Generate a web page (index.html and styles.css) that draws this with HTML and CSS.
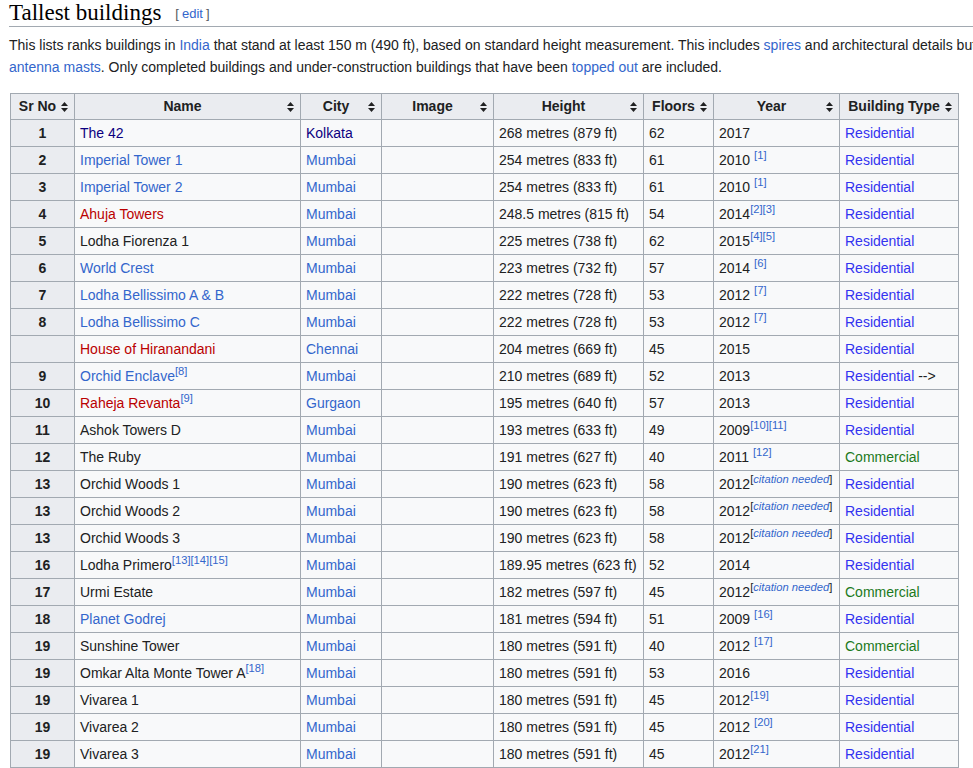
FILE: index.html
```html
<!DOCTYPE html>
<html lang="en">
<head>
<meta charset="utf-8">
<title>Tallest buildings</title>
<link rel="stylesheet" href="styles.css">
</head>
<body>
<div class="content">
  <h2 class="section-title"><span class="headline">Tallest buildings</span><span class="editsection"><span class="br">[</span><a href="#">edit</a><span class="br">]</span></span></h2>
  <p class="intro">This lists ranks buildings in <a href="#">India</a> that stand at least 150 m (490 ft), based on standard height measurement. This includes <a href="#">spires</a> and architectural details but not <a href="#">antenna masts</a>. Only completed buildings and under-construction buildings that have been <a href="#">topped out</a> are included.</p>

  <table class="wikitable">
    <colgroup>
      <col class="c-no"><col class="c-name"><col class="c-city"><col class="c-img"><col class="c-h"><col class="c-fl"><col class="c-yr"><col class="c-type">
    </colgroup>
    <thead>
      <tr>
        <th><div class="hd"><span class="lbl">Sr No</span><svg class="sort" viewBox="0 0 7 10" width="7" height="10"><path d="M0 4 L3.5 0 L7 4Z M0 6 L3.5 10 L7 6Z"/></svg></div></th>
        <th><div class="hd"><span class="lbl">Name</span><svg class="sort" viewBox="0 0 7 10" width="7" height="10"><path d="M0 4 L3.5 0 L7 4Z M0 6 L3.5 10 L7 6Z"/></svg></div></th>
        <th><div class="hd"><span class="lbl">City</span><svg class="sort" viewBox="0 0 7 10" width="7" height="10"><path d="M0 4 L3.5 0 L7 4Z M0 6 L3.5 10 L7 6Z"/></svg></div></th>
        <th><div class="hd"><span class="lbl">Image</span><svg class="sort" viewBox="0 0 7 10" width="7" height="10"><path d="M0 4 L3.5 0 L7 4Z M0 6 L3.5 10 L7 6Z"/></svg></div></th>
        <th><div class="hd"><span class="lbl">Height</span><svg class="sort" viewBox="0 0 7 10" width="7" height="10"><path d="M0 4 L3.5 0 L7 4Z M0 6 L3.5 10 L7 6Z"/></svg></div></th>
        <th><div class="hd"><span class="lbl">Floors</span><svg class="sort" viewBox="0 0 7 10" width="7" height="10"><path d="M0 4 L3.5 0 L7 4Z M0 6 L3.5 10 L7 6Z"/></svg></div></th>
        <th><div class="hd"><span class="lbl">Year</span><svg class="sort" viewBox="0 0 7 10" width="7" height="10"><path d="M0 4 L3.5 0 L7 4Z M0 6 L3.5 10 L7 6Z"/></svg></div></th>
        <th><div class="hd"><span class="lbl">Building Type</span><svg class="sort" viewBox="0 0 7 10" width="7" height="10"><path d="M0 4 L3.5 0 L7 4Z M0 6 L3.5 10 L7 6Z"/></svg></div></th>
      </tr>
    </thead>
    <tbody>
      <tr><th>1</th><td><a class="visited" href="#">The 42</a></td><td><a class="visited" href="#">Kolkata</a></td><td></td><td>268 metres (879 ft)</td><td>62</td><td>2017</td><td><span class="res">Residential</span></td></tr>
      <tr><th>2</th><td><a href="#">Imperial Tower 1</a></td><td><a href="#">Mumbai</a></td><td></td><td>254 metres (833 ft)</td><td>61</td><td>2010 <sup><a href="#">[1]</a></sup></td><td><span class="res">Residential</span></td></tr>
      <tr><th>3</th><td><a href="#">Imperial Tower 2</a></td><td><a href="#">Mumbai</a></td><td></td><td>254 metres (833 ft)</td><td>61</td><td>2010 <sup><a href="#">[1]</a></sup></td><td><span class="res">Residential</span></td></tr>
      <tr><th>4</th><td><a class="new" href="#">Ahuja Towers</a></td><td><a href="#">Mumbai</a></td><td></td><td>248.5 metres (815 ft)</td><td>54</td><td>2014<sup><a href="#">[2]</a></sup><sup><a href="#">[3]</a></sup></td><td><span class="res">Residential</span></td></tr>
      <tr><th>5</th><td>Lodha Fiorenza 1</td><td><a href="#">Mumbai</a></td><td></td><td>225 metres (738 ft)</td><td>62</td><td>2015<sup><a href="#">[4]</a></sup><sup><a href="#">[5]</a></sup></td><td><span class="res">Residential</span></td></tr>
      <tr><th>6</th><td><a href="#">World Crest</a></td><td><a href="#">Mumbai</a></td><td></td><td>223 metres (732 ft)</td><td>57</td><td>2014 <sup><a href="#">[6]</a></sup></td><td><span class="res">Residential</span></td></tr>
      <tr><th>7</th><td><a href="#">Lodha Bellissimo A &amp; B</a></td><td><a href="#">Mumbai</a></td><td></td><td>222 metres (728 ft)</td><td>53</td><td>2012 <sup><a href="#">[7]</a></sup></td><td><span class="res">Residential</span></td></tr>
      <tr><th>8</th><td><a href="#">Lodha Bellissimo C</a></td><td><a href="#">Mumbai</a></td><td></td><td>222 metres (728 ft)</td><td>53</td><td>2012 <sup><a href="#">[7]</a></sup></td><td><span class="res">Residential</span></td></tr>
      <tr><th></th><td><a class="new" href="#">House of Hiranandani</a></td><td><a href="#">Chennai</a></td><td></td><td>204 metres (669 ft)</td><td>45</td><td>2015</td><td><span class="res">Residential</span></td></tr>
      <tr><th>9</th><td><a href="#">Orchid Enclave</a><sup><a href="#">[8]</a></sup></td><td><a href="#">Mumbai</a></td><td></td><td>210 metres (689 ft)</td><td>52</td><td>2013</td><td><span class="res">Residential</span> --&gt;</td></tr>
      <tr><th>10</th><td><a class="new" href="#">Raheja Revanta</a><sup><a href="#">[9]</a></sup></td><td><a href="#">Gurgaon</a></td><td></td><td>195 metres (640 ft)</td><td>57</td><td>2013</td><td><span class="res">Residential</span></td></tr>
      <tr><th>11</th><td>Ashok Towers D</td><td><a href="#">Mumbai</a></td><td></td><td>193 metres (633 ft)</td><td>49</td><td>2009<sup><a href="#">[10]</a></sup><sup><a href="#">[11]</a></sup></td><td><span class="res">Residential</span></td></tr>
      <tr><th>12</th><td>The Ruby</td><td><a href="#">Mumbai</a></td><td></td><td>191 metres (627 ft)</td><td>40</td><td>2011 <sup><a href="#">[12]</a></sup></td><td><span class="com">Commercial</span></td></tr>
      <tr><th>13</th><td>Orchid Woods 1</td><td><a href="#">Mumbai</a></td><td></td><td>190 metres (623 ft)</td><td>58</td><td>2012<sup class="cn">[<a href="#"><i>citation needed</i></a>]</sup></td><td><span class="res">Residential</span></td></tr>
      <tr><th>13</th><td>Orchid Woods 2</td><td><a href="#">Mumbai</a></td><td></td><td>190 metres (623 ft)</td><td>58</td><td>2012<sup class="cn">[<a href="#"><i>citation needed</i></a>]</sup></td><td><span class="res">Residential</span></td></tr>
      <tr><th>13</th><td>Orchid Woods 3</td><td><a href="#">Mumbai</a></td><td></td><td>190 metres (623 ft)</td><td>58</td><td>2012<sup class="cn">[<a href="#"><i>citation needed</i></a>]</sup></td><td><span class="res">Residential</span></td></tr>
      <tr><th>16</th><td>Lodha Primero<sup><a href="#">[13]</a></sup><sup><a href="#">[14]</a></sup><sup><a href="#">[15]</a></sup></td><td><a href="#">Mumbai</a></td><td></td><td>189.95 metres (623 ft)</td><td>52</td><td>2014</td><td><span class="res">Residential</span></td></tr>
      <tr><th>17</th><td>Urmi Estate</td><td><a href="#">Mumbai</a></td><td></td><td>182 metres (597 ft)</td><td>45</td><td>2012<sup class="cn">[<a href="#"><i>citation needed</i></a>]</sup></td><td><span class="com">Commercial</span></td></tr>
      <tr><th>18</th><td><a href="#">Planet Godrej</a></td><td><a href="#">Mumbai</a></td><td></td><td>181 metres (594 ft)</td><td>51</td><td>2009 <sup><a href="#">[16]</a></sup></td><td><span class="res">Residential</span></td></tr>
      <tr><th>19</th><td>Sunshine Tower</td><td><a href="#">Mumbai</a></td><td></td><td>180 metres (591 ft)</td><td>40</td><td>2012 <sup><a href="#">[17]</a></sup></td><td><span class="com">Commercial</span></td></tr>
      <tr><th>19</th><td>Omkar Alta Monte Tower A<sup><a href="#">[18]</a></sup></td><td><a href="#">Mumbai</a></td><td></td><td>180 metres (591 ft)</td><td>53</td><td>2016</td><td><span class="res">Residential</span></td></tr>
      <tr><th>19</th><td>Vivarea 1</td><td><a href="#">Mumbai</a></td><td></td><td>180 metres (591 ft)</td><td>45</td><td>2012<sup><a href="#">[19]</a></sup></td><td><span class="res">Residential</span></td></tr>
      <tr><th>19</th><td>Vivarea 2</td><td><a href="#">Mumbai</a></td><td></td><td>180 metres (591 ft)</td><td>45</td><td>2012 <sup><a href="#">[20]</a></sup></td><td><span class="res">Residential</span></td></tr>
      <tr><th>19</th><td>Vivarea 3</td><td><a href="#">Mumbai</a></td><td></td><td>180 metres (591 ft)</td><td>45</td><td>2012<sup><a href="#">[21]</a></sup></td><td><span class="res">Residential</span></td></tr>
    </tbody>
  </table>
</div>
</body>
</html>
```
FILE: styles.css
```css
html {
  overflow: hidden;
  background: #fff;
}
body {
  margin: 0;
  font-family: "Liberation Sans", Arial, sans-serif;
  font-size: 14px;
  color: #202122;
}
a {
  color: #3366cc;
  text-decoration: none;
}
a.visited {
  color: #0b0080;
}
a.new {
  color: #ba0000;
}
.content {
  width: 1030px;
  padding-left: 9px;
}
.section-title {
  margin: 0;
  padding: 0;
  font-family: "Liberation Serif", "Times New Roman", serif;
  font-weight: normal;
  font-size: 23px;
  line-height: 26px;
  height: 26px;
  border-bottom: 1px solid #a2a9b1;
  color: #000;
}
.editsection {
  font-family: "Liberation Sans", Arial, sans-serif;
  font-size: 13px;
  margin-left: 14px;
  vertical-align: 2px;
}
.editsection .br {
  color: #54595d;
}
.editsection a {
  margin: 0 3px;
}
.intro {
  margin: 7px 0 0;
  line-height: 22px;
}
.wikitable {
  margin: 15px 0 0 1px;
  border-collapse: collapse;
  table-layout: fixed;
  width: 949px;
  background: #f8f9fa;
  border: 1px solid #a2a9b1;
  color: #202122;
}
.c-no { width: 64px; }
.c-name { width: 226px; }
.c-city { width: 81px; }
.c-img { width: 112px; }
.c-h { width: 150px; }
.c-fl { width: 70px; }
.c-yr { width: 126px; }
.c-type { width: 119px; }
.wikitable th,
.wikitable td {
  border: 1px solid #a2a9b1;
  padding: 2px 5px;
  line-height: 22px;
  white-space: nowrap;
  overflow: hidden;
  text-align: left;
}
.wikitable th {
  background: #eaecf0;
  font-weight: bold;
  text-align: center;
}
.wikitable thead th {
  line-height: 21px;
  padding: 2px 6px;
}
.hd {
  display: flex;
  align-items: center;
}
.hd .lbl {
  flex: 1;
  text-align: center;
}
.sort {
  flex: none;
  margin-left: 3px;
  fill: #202122;
}
.res {
  color: #3333f0;
}
.com {
  color: #1c7a1c;
}
sup {
  font-size: 80%;
  line-height: 1;
  vertical-align: super;
}
sup.cn i {
  font-style: italic;
}
```
